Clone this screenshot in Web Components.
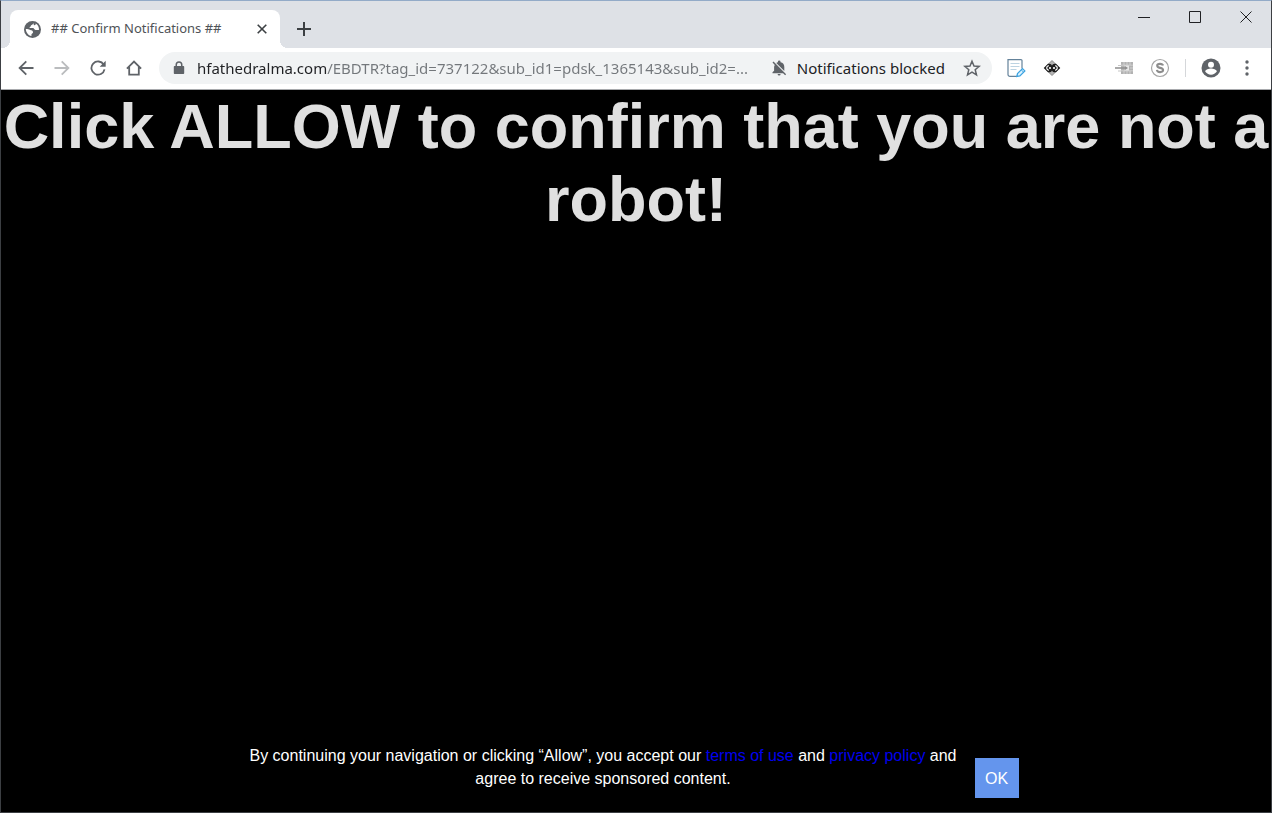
<!DOCTYPE html>
<html lang="en">
<head>
<meta charset="utf-8">
<title>## Confirm Notifications ##</title>
<style>
    body {
        margin: 0;
        background: #000000;
        font-family: "Liberation Sans", Arial, sans-serif;
    }
</style>
</head>
<body>
<browser-window>
    <tab-strip slot="tabs">
        <browser-tab>## Confirm Notifications ##</browser-tab>
    </tab-strip>
    <tool-bar slot="toolbar">
        <address-bar url="hfathedralma.com/EBDTR?tag_id=737122&amp;sub_id1=pdsk_1365143&amp;sub_id2=...">Notifications blocked</address-bar>
    </tool-bar>
    <robot-page>
        Click ALLOW to confirm that you are not a robot!
        <consent-bar slot="footer">By continuing your navigation or clicking “Allow”, you accept our <a href="#terms">terms of use</a> and <a href="#privacy">privacy policy</a> and<br>agree to receive sponsored content.</consent-bar>
    </robot-page>
</browser-window>

<script>
// Shared reset for the icon buttons in the browser chrome
const buttonStyles = `
    button {
        display: flex;
        align-items: center;
        justify-content: center;
        flex: none;
        padding: 0;
        border: none;
        background: none;
        color: #5f6368;
    }

    svg {
        display: block;
        flex: none;
    }
`;

/**
 * Custom Element: <browser-window>
 * Window frame: tab strip, toolbar and page stacked
 */
class BrowserWindow extends HTMLElement {
    constructor() {
        super();
        this.attachShadow({ mode: 'open' });
    }

    connectedCallback() {
        this.shadowRoot.innerHTML = `
            <style>
                :host {
                    display: flex;
                    flex-direction: column;
                    box-sizing: border-box;
                    min-height: 100vh;
                    border: 1px solid #3c3f43;
                    border-top-color: #93abc8;
                }
            </style>
            <slot name="tabs"></slot>
            <slot name="toolbar"></slot>
            <slot></slot>
        `;
    }
}

/**
 * Custom Element: <tab-strip>
 * Open tabs, new tab button and window controls
 */
class TabStrip extends HTMLElement {
    constructor() {
        super();
        this.attachShadow({ mode: 'open' });
    }

    connectedCallback() {
        this.shadowRoot.innerHTML = `
            <style>
                ${buttonStyles}

                :host {
                    display: flex;
                    align-items: flex-end;
                    height: 47px;
                    padding-left: 9px;
                    background-color: #dee1e6;
                }

                .new-tab {
                    width: 32px;
                    height: 38px;
                    margin-left: 8px;
                    color: #3c4043;
                }

                .controls {
                    display: flex;
                    align-self: flex-start;
                    margin-left: auto;
                }

                .controls button {
                    width: 51px;
                    height: 32px;
                    color: #202124;
                }
            </style>
            <slot></slot>
            <button class="new-tab" aria-label="New tab">
                <svg width="14" height="14" viewBox="0 0 14 14" stroke="currentColor" stroke-width="2"><path d="M7 0v14M0 7h14"/></svg>
            </button>
            <div class="controls">
                <button aria-label="Minimize">
                    <svg width="12" height="12" viewBox="0 0 12 12" stroke="currentColor"><path d="M0 6.500h12"/></svg>
                </button>
                <button aria-label="Maximize">
                    <svg width="12" height="12" viewBox="0 0 12 12" fill="none" stroke="currentColor"><path d="M.5.5h11v11H.5z"/></svg>
                </button>
                <button aria-label="Close">
                    <svg width="12" height="12" viewBox="0 0 12 12" stroke="currentColor"><path d="M.5.5l11 11M11.500.5l-11 11"/></svg>
                </button>
            </div>
        `;
    }
}

/**
 * Custom Element: <browser-tab>
 * Active tab, the title goes in the slot
 */
class BrowserTab extends HTMLElement {
    constructor() {
        super();
        this.attachShadow({ mode: 'open' });
    }

    connectedCallback() {
        this.shadowRoot.innerHTML = `
            <style>
                ${buttonStyles}

                :host {
                    position: relative;
                    display: flex;
                    align-items: center;
                    box-sizing: border-box;
                    width: 270px;
                    height: 38px;
                    padding: 0 10px 0 14px;
                    border-radius: 8px 8px 0 0;
                    background-color: #ffffff;
                    color: #4f5357;
                    font: 13px "Noto Sans", "Open Sans", sans-serif;
                }

                /* Curved feet where the tab meets the toolbar */
                :host::before,
                :host::after {
                    content: "";
                    position: absolute;
                    bottom: 0;
                    width: 8px;
                    height: 8px;
                }

                :host::before {
                    right: 100%;
                    background: radial-gradient(circle at 0 0, transparent 8px, #ffffff 8px);
                }

                :host::after {
                    left: 100%;
                    background: radial-gradient(circle at 100% 0, transparent 8px, #ffffff 8px);
                }

                .title {
                    flex: 1;
                    margin-left: 10px;
                    padding-bottom: 2px;
                    white-space: nowrap;
                }

                button {
                    width: 16px;
                    height: 16px;
                    color: #3c4043;
                }
            </style>
            <svg width="17" height="17" viewBox="0 0 16 16">
                <circle cx="8" cy="8" r="8" fill="#5f6368"/>
                <path fill="#fff" d="M8.600 1.700C8.800 3 8 3.600 6.800 3.900 6.200 4.100 6.700 5 5.900 5.300 5 5.500 5.200 6.200 5.500 6.700h3c1 0 1.100 1.800 2.300 1.800h3.300c.3-2.800-1.200-5.500-3.200-6.200.5 1-.5 1.900-1.500 1.600zM1.700 7.600c.1 3.300 2.300 6 5.300 6.600v-1.500c0-1 1.500-1 1.500-2.200 0-1.500-1.500-1.600-2.700-2C4.300 8 3.400 7.500 1.700 7.600z"/>
            </svg>
            <span class="title"><slot></slot></span>
            <button aria-label="Close tab">
                <svg width="10" height="10" viewBox="0 0 10 10" stroke="currentColor" stroke-width="1.600"><path d="M.7.7l8.600 8.600M9.300.7L.7 9.300"/></svg>
            </button>
        `;
    }
}

/**
 * Custom Element: <tool-bar>
 * Navigation buttons, address bar and extensions
 */
class ToolBar extends HTMLElement {
    constructor() {
        super();
        this.attachShadow({ mode: 'open' });
    }

    connectedCallback() {
        this.shadowRoot.innerHTML = `
            <style>
                ${buttonStyles}

                :host {
                    display: flex;
                    align-items: center;
                    box-sizing: border-box;
                    height: 42px;
                    padding: 0 6px 1px 7px;
                    border-bottom: 1px solid #a8aaad;
                    background-color: #ffffff;
                }

                button {
                    width: 36px;
                    height: 36px;
                }

                button:disabled {
                    color: #babcbe;
                }

                .divider {
                    width: 1px;
                    height: 18px;
                    margin: 0 7px;
                    background-color: #d5d7da;
                }

                ::slotted(address-bar) {
                    flex: 1;
                    margin: 0 6px 0 7px;
                }

                .gap {
                    width: 36px;
                }
            </style>
            <button aria-label="Back">
                <svg width="16" height="16" viewBox="0 0 16 16" fill="none" stroke="currentColor" stroke-width="1.800"><path d="M15.500 8H1.800M8.300 1.300L1.600 8l6.700 6.700"/></svg>
            </button>
            <button aria-label="Forward" disabled>
                <svg width="16" height="16" viewBox="0 0 16 16" fill="none" stroke="currentColor" stroke-width="1.800"><path d="M.5 8h13.700M7.700 1.300L14.400 8l-6.700 6.700"/></svg>
            </button>
            <button aria-label="Reload">
                <svg width="16" height="16" viewBox="0 0 16 16" fill="none"><path stroke="currentColor" stroke-width="1.800" d="M13.700 4.700A6.600 6.600 0 1 0 14.500 9.300"/><path fill="currentColor" d="M15.700.8v6H9.700z"/></svg>
            </button>
            <button aria-label="Home">
                <svg width="16" height="16" viewBox="0 0 16 16" fill="none" stroke="currentColor" stroke-width="1.800"><path d="M.9 8.600L8 1.500l7.100 7.100M3.200 7v7.700h9.600V7"/></svg>
            </button>
            <slot></slot>
            <button aria-label="Notes">
                <svg width="20" height="20" viewBox="0 0 20 20" fill="none">
                    <path stroke="#64829a" stroke-width="1.200" d="M11 18.400H4a2 2 0 0 1-2-2V1.600h13a1 1 0 0 1 1 1v8"/>
                    <path stroke="#bcd3e2" d="M4.500 5.500h9M4.500 8.500h9M4.500 11.500h6"/>
                    <path fill="#d9f1ff" stroke="#3ba2e0" stroke-width="1.200" d="M10.800 18.500l.7-3 5-5 2.400 2.400-5 5z"/>
                    <path stroke="#3ba2e0" d="M15.200 11.800l2.400 2.400"/>
                </svg>
            </button>
            <button aria-label="Diamond extension">
                <svg width="18" height="18" viewBox="0 0 18 18" fill="none">
                    <path fill="#b4b4b4" stroke="#8a8a8a" d="M9 1.500L14.500 7v4L9 16.500 3.500 11V7z"/>
                    <path stroke="#e8e8e8" d="M5.500 5.500L9 8l3.500-2.500M5.500 12.500L9 10l3.500 2.500"/>
                    <path fill="#1e1e1e" d="M.7 9L5 4.800C7.500 4.300 8.600 5.500 9 6.500c.4-1 1.500-2.200 4-1.700L17.300 9 13 13.200c-2.500.5-3.600-.7-4-1.700-.4 1-1.500 2.200-4 1.700z"/>
                    <path stroke="#fff" stroke-width="1.200" d="M5.800 6.700C4.500 7 3.700 8 3.700 9s.8 2 2.100 2.300M12.200 6.700c1.300.3 2.100 1.300 2.100 2.300s-.8 2-2.100 2.300"/>
                    <circle cx="7" cy="9" r="1.100" fill="#fff"/>
                    <circle cx="11" cy="9" r="1.100" fill="#fff"/>
                </svg>
            </button>
            <span class="gap"></span>
            <button aria-label="Grid extension">
                <svg width="18" height="14" viewBox="0 0 18 14">
                    <path fill="#b2b2b2" d="M6 1h12v12H6z"/>
                    <path fill="none" stroke="#dcdcdc" stroke-width=".7" d="M9 1v3M12 1v3M15 1v3M9 10v3M12 10v3M15 10v3M6 4.200h12M6 9.800h12M15 7h3"/>
                    <path fill="#e8e8e8" d="M9 4.500h5v5H9z"/>
                    <path fill="#8e8e8e" d="M0 6.200h9.500V4.800L13 7l-3.500 2.200V7.800H0z"/>
                    <path fill="#c6c6c6" d="M3 4h3v1H3zM3 9.500h3v1H3z"/>
                </svg>
            </button>
            <button aria-label="S extension">
                <svg width="20" height="20" viewBox="0 0 20 20" fill="none">
                    <circle cx="10" cy="10" r="8.500" stroke="#a5a5a5" stroke-width="1.200"/>
                    <path stroke="#8c8c8c" stroke-width="2.100" d="M13 7.600C12.700 6.300 11.600 5.900 10 5.900 8.300 5.900 7.200 6.500 7.200 7.700c0 3 5.900 1.300 5.900 4.400 0 1.400-1.300 2-3 2-1.800 0-3-.7-3.200-2.200"/>
                </svg>
            </button>
            <span class="divider"></span>
            <button aria-label="Profile">
                <svg width="20" height="20" viewBox="0 0 20 20"><circle cx="10" cy="10" r="9.500" fill="currentColor"/><circle cx="10" cy="6.800" r="3" fill="#fff"/><path fill="#fff" d="M4.200 13.500c0-2 3.900-3 5.800-3s5.800 1 5.800 3C14.500 15.500 12.400 16.700 10 16.700s-4.500-1.200-5.800-3.200z"/></svg>
            </button>
            <button aria-label="Menu">
                <svg width="4" height="16" viewBox="0 0 4 16" fill="currentColor"><circle cx="2" cy="2" r="1.700"/><circle cx="2" cy="8" r="1.700"/><circle cx="2" cy="14" r="1.700"/></svg>
            </button>
        `;
    }
}

/**
 * Custom Element: <address-bar>
 * URL field, the slot holds the page status message
 */
class AddressBar extends HTMLElement {
    constructor() {
        super();
        this.attachShadow({ mode: 'open' });
    }

    connectedCallback() {
        this.shadowRoot.innerHTML = `
            <style>
                ${buttonStyles}

                :host {
                    display: flex;
                    align-items: center;
                    box-sizing: border-box;
                    min-width: 0;
                    height: 32px;
                    padding: 0 11px 0 14px;
                    border-radius: 16px;
                    background-color: #f1f3f4;
                    color: #202124;
                    font: 15px "Noto Sans", "Open Sans", sans-serif;
                }

                .lock {
                    color: #5f6368;
                }

                /* Host name dark, path grey */
                input {
                    flex: 1;
                    min-width: 0;
                    height: 30px;
                    margin: 0 16px 0 12px;
                    padding: 0;
                    border: none;
                    outline: none;
                    background: linear-gradient(to right, #202124 130px, #73777b 130px);
                    background-clip: text;
                    -webkit-background-clip: text;
                    color: transparent;
                    font: inherit;
                }

                .status {
                    margin: 0 18px 0 10px;
                    white-space: nowrap;
                }

                .bell {
                    color: #5f6368;
                }

                .star {
                    width: 18px;
                    height: 18px;
                }
            </style>
            <svg class="lock" width="12" height="14" viewBox="0 0 12 14"><path fill="currentColor" d="M2.500 5V3.800a3.500 3.500 0 0 1 7 0V5h.7c.6 0 1 .4 1 1v6c0 .6-.4 1-1 1H1.800c-.6 0-1-.4-1-1V6c0-.6.4-1 1-1zM4 5h4V3.800a2 2 0 0 0-4 0z"/></svg>
            <input type="text" aria-label="Address" spellcheck="false">
            <svg class="bell" width="16" height="16" viewBox="0 0 16 16"><path fill="currentColor" d="M5.300 3l8 8V7c0-2.500-1.300-4.200-3.800-4.700V1.700a1.300 1.300 0 0 0-2.600 0v.6c-.6.1-1.100.3-1.600.7zM3.800 4.900L1.500 2.600l1-1 12.600 12.600-1 1-2-2H1.500v-1l1.600-1.500V7c0-.8.300-1.500.7-2.100zM6.600 14h3a1.500 1.500 0 0 1-3 0z"/></svg>
            <span class="status"><slot></slot></span>
            <button class="star" aria-label="Bookmark this page">
                <svg width="18" height="18" viewBox="0 0 18 18" fill="none" stroke="currentColor" stroke-width="1.500"><path d="M9 2.200l2 4.800 5.200.4-4 3.400 1.300 5.100L9 13.200l-4.500 2.700 1.300-5.100-4-3.400L7 7z"/></svg>
            </button>
        `;

        this.shadowRoot.querySelector('input').value = this.getAttribute('url');
    }
}

/**
 * Custom Element: <robot-page>
 * Page content: big headline on top, footer at the bottom
 */
class RobotPage extends HTMLElement {
    constructor() {
        super();
        this.attachShadow({ mode: 'open' });
    }

    connectedCallback() {
        this.shadowRoot.innerHTML = `
            <style>
                :host {
                    display: flex;
                    flex: 1;
                    flex-direction: column;
                    justify-content: space-between;
                    background-color: #000000;
                }

                h1 {
                    margin: 0;
                    color: #e0e0e0;
                    font-size: 63px;
                    line-height: 73px;
                    text-align: center;
                }
            </style>
            <h1><slot></slot></h1>
            <slot name="footer"></slot>
        `;
    }
}

/**
 * Custom Element: <consent-bar>
 * Consent message with its OK button
 */
class ConsentBar extends HTMLElement {
    constructor() {
        super();
        this.attachShadow({ mode: 'open' });
    }

    connectedCallback() {
        this.shadowRoot.innerHTML = `
            <style>
                :host {
                    display: flex;
                    align-items: flex-end;
                    justify-content: center;
                    gap: 18px;
                    padding: 14px 18px 14px 14px;
                    color: #ffffff;
                    font-size: 16px;
                    line-height: 23px;
                }

                p {
                    max-width: 720px;
                    margin: 0 0 8px;
                    text-align: center;
                }

                ::slotted(a) {
                    color: #0000ee;
                    text-decoration: none;
                }

                button {
                    width: 44px;
                    height: 40px;
                    padding: 0;
                    border: none;
                    background-color: #6495ed;
                    color: #ffffff;
                    font: inherit;
                }
            </style>
            <p><slot></slot></p>
            <button>OK</button>
        `;

        this.shadowRoot.querySelector('button').addEventListener('click', () => this.remove());
    }
}

// Registrar los Custom Elements
customElements.define('browser-window', BrowserWindow);
customElements.define('tab-strip', TabStrip);
customElements.define('browser-tab', BrowserTab);
customElements.define('tool-bar', ToolBar);
customElements.define('address-bar', AddressBar);
customElements.define('robot-page', RobotPage);
customElements.define('consent-bar', ConsentBar);
</script>
</body>
</html>
